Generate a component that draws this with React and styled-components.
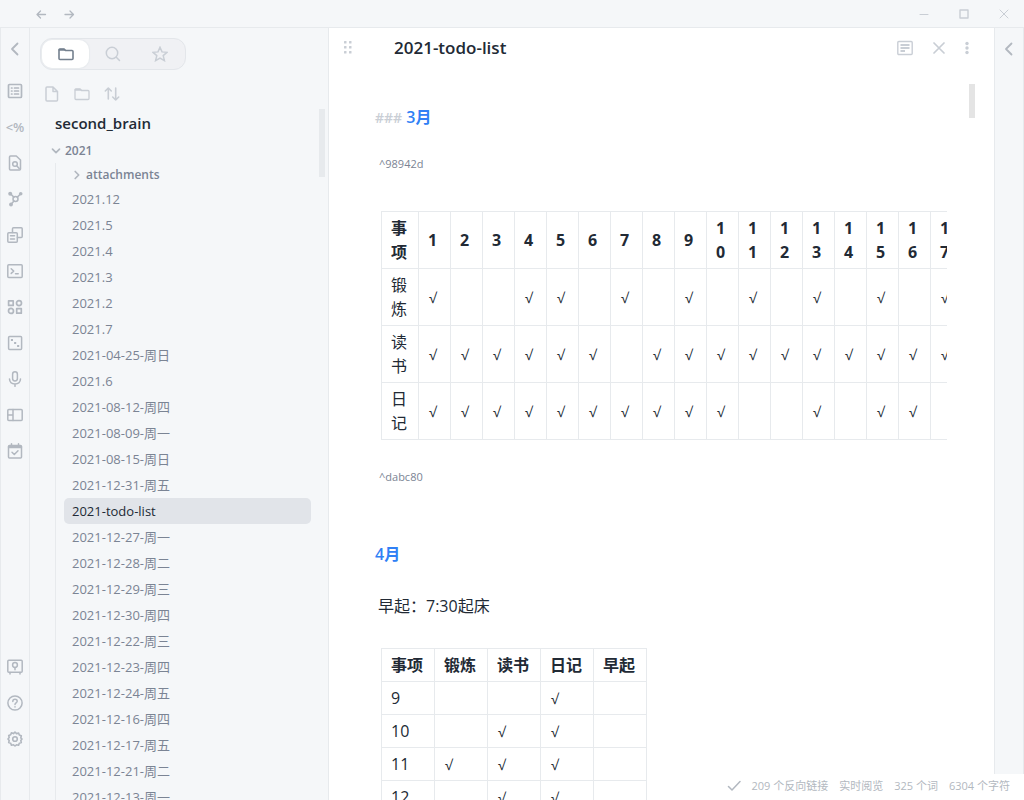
import React from "react";
import styled, { createGlobalStyle } from "styled-components";

const color = {
  chrome: "#f5f7f9",
  line: "#e7eaed",
  text: "#222a35",
  muted: "#7b8494",
  faint: "#b2b8c0",
  pale: "#c9ced5",
  accent: "#3080f5",
  selected: "#e1e4e9",
};

const GlobalStyle = createGlobalStyle`
  * { box-sizing: border-box; }
  body {
    margin: 0;
    background: #fff;
    color: ${color.text};
    font: 13px/24px "Open Sans", "Noto Sans CJK SC", sans-serif;
  }
  button { border: 0; padding: 0; margin: 0; background: none; color: inherit; font: inherit; cursor: pointer; }
`;

const Window = styled.div`
  display: flex;
  flex-direction: column;
  height: 100vh;
  overflow: hidden;
  position: relative;
`;

const TitleBar = styled.header`
  display: flex;
  justify-content: space-between;
  flex: none;
  height: 28px;
  padding-left: 27px;
  background: ${color.chrome};
  border-bottom: 1px solid ${color.line};
`;

const TitleGroup = styled.div`
  display: flex;
`;

const IconButton = styled.button`
  display: flex;
  align-items: center;
  justify-content: center;
  flex: none;
  width: ${(p) => p.$w || 28}px;
  height: ${(p) => p.$h || 28}px;
  color: ${(p) => p.$color || color.faint};
`;

const Workspace = styled.div`
  display: flex;
  flex: 1;
  min-height: 0;
`;

const Ribbon = styled.nav`
  display: flex;
  flex-direction: column;
  justify-content: space-between;
  flex: none;
  width: 30px;
  padding-bottom: 43px;
  background: ${color.chrome};
  border-left: 1px solid ${color.line};
  border-right: 1px solid ${color.line};
`;

const RibbonGroup = styled.div`
  display: flex;
  flex-direction: column;
`;

const RibbonToggle = styled(IconButton)`
  margin-bottom: 3px;
`;

const TemplateMark = styled.span`
  font-size: 13px;
  font-weight: 600;
`;

const Sidebar = styled.aside`
  display: flex;
  flex-direction: column;
  flex: none;
  width: 299px;
  background: ${color.chrome};
  border-right: 1px solid ${color.line};
`;

const TabStrip = styled.div`
  display: flex;
  align-self: flex-start;
  width: 146px;
  margin: 10px 10px 0;
  padding: 1px;
  background: #f0f1f4;
  border: 1px solid #e3e6ea;
  border-radius: 12px;
`;

const Tab = styled.button`
  display: flex;
  align-items: center;
  justify-content: center;
  flex: 1;
  height: 28px;
  border-radius: 10px;
  color: ${(p) => (p.$active ? "#74808e" : color.pale)};
  background: ${(p) => (p.$active ? "#fff" : "none")};
  box-shadow: ${(p) => (p.$active ? "0 0 1px 1px #e8ebee" : "none")};
`;

const NavActions = styled.div`
  display: flex;
  gap: 2px;
  padding: 10px 8px 0;
`;

const Tree = styled.div`
  position: relative;
  flex: 1;
  min-height: 0;
  overflow: hidden;
  color: ${color.muted};
`;

const TreeScroll = styled.div`
  position: absolute;
  top: 1px;
  right: 3px;
  width: 6px;
  height: 68px;
  background: ${color.line};
`;

const VaultName = styled.h2`
  margin: 0;
  padding: 3px 25px 4px;
  font-size: 15px;
  line-height: 24px;
  font-weight: 600;
  color: ${color.text};
`;

const Folder = styled.button`
  display: flex;
  align-items: center;
  gap: 4px;
  height: ${(p) => (p.$nested ? 23 : 24)}px;
  padding-left: ${(p) => (p.$nested ? 16 : 21)}px;
  font-size: 12px;
  font-weight: 600;
  svg { color: ${color.faint}; }
`;

const Children = styled.div`
  margin-left: 25px;
  border-left: 1px solid ${color.line};
`;

const FileList = styled.ul`
  list-style: none;
  margin: 0;
  padding: 0 17px 0 8px;
`;

const FileLink = styled.a`
  display: block;
  height: 26px;
  line-height: 26px;
  padding: 0 8px;
  border-radius: 5px;
  white-space: nowrap;
  text-decoration: none;
  color: ${(p) => (p.$active ? color.text : color.muted)};
  background: ${(p) => (p.$active ? color.selected : "none")};
`;

const Note = styled.main`
  position: relative;
  flex: 1;
  min-width: 0;
  overflow: hidden;
`;

const NoteHeader = styled.div`
  display: flex;
  align-items: center;
  height: 40px;
  padding: 0 16px 0 5px;
`;

const NoteTitle = styled.h1`
  flex: 1;
  margin: 0 0 0 32px;
  font-size: 17px;
  font-weight: 600;
`;

const NoteScroll = styled.div`
  position: absolute;
  top: 56px;
  right: 19px;
  width: 6px;
  height: 34px;
  background: #e4e4e4;
`;

const NoteBody = styled.article`
  padding: 37px 47px 0 46px;
  font-size: 16px;
`;

const Heading = styled.h3`
  margin: 0;
  font-size: 16px;
  line-height: 24px;
  font-weight: 600;
  color: ${color.accent};
`;

const Hashes = styled.span`
  color: ${color.pale};
  font-size: 14px;
  line-height: 16px;
`;

const BlockId = styled.p`
  margin: ${(p) => p.$margin};
  padding-left: 4px;
  font-size: 11px;
  line-height: 20px;
  color: ${color.muted};
`;

const Paragraph = styled.p`
  margin: 28px 0 30px;
  padding-left: 3px;
`;

const TableClip = styled.div`
  margin-left: 6px;
  overflow: hidden;
`;

const DataTable = styled.table`
  border-collapse: collapse;
  table-layout: fixed;
  width: ${(p) => p.$width}px;
  font-size: 16px;
  line-height: 24px;
  col { width: ${(p) => p.$col}px; }
  col:first-child { width: ${(p) => p.$first}px; }
  th, td {
    height: 33px;
    padding: 4px 9px;
    border: 1px solid ${color.line};
    text-align: left;
    word-break: break-all;
  }
  th { font-weight: 700; }
  td { font-weight: 400; }
`;

const Check = styled.span`
  padding-left: 1px;
  font-size: 14px;
  line-height: 16px;
`;

const RightRibbon = styled(Ribbon)``;

const StatusBar = styled.footer`
  position: absolute;
  right: 0;
  bottom: 0;
  display: flex;
  align-items: center;
  gap: 11px;
  height: 26px;
  padding: 0 14px 2px 10px;
  background: #fff;
  font-size: 11px;
  color: ${color.faint};
`;

function Icon({ size = 16, w = 1.5, children }) {
  return (
    <svg width={size} height={size} viewBox={`0 0 ${size} ${size}`} fill="none" stroke="currentColor"
      strokeWidth={w} strokeLinecap="round" strokeLinejoin="round" aria-hidden="true">
      {children}
    </svg>
  );
}

const Chevron = () => <Icon w={1.8}><path d="M10.500 2.500 5 8l5.500 5.500" /></Icon>;
const FolderIcon = ({ w = 1.5 }) => (
  <Icon w={w}>
    <path d="M1 4a1 1 0 0 1 1-1h4l1.500 1.500H14a1 1 0 0 1 1 1V12.500a1 1 0 0 1-1 1H2a1 1 0 0 1-1-1Z" />
    <path d="M1.500 3.800h5" strokeWidth="2" />
  </Icon>
);

const ribbonTop = [
  ["列表", <Icon w={1.7}><rect x="1.500" y="1.500" width="13" height="13" rx="1" /><path d="M4.500 5h.5M4.500 8h.5M4.500 11h.5M7.500 5h4M7.500 8h4M7.500 11h4" /></Icon>],
  ["模板", <TemplateMark>&lt;%</TemplateMark>],
  ["快速切换", <Icon><path d="M3.500 1h5.800L13.500 5v9a1 1 0 0 1-1 1h-9a1 1 0 0 1-1-1V2a1 1 0 0 1 1-1Z" /><circle cx="8" cy="9" r="2.300" /><path d="m9.700 10.700 2.500 2.800" /></Icon>],
  ["关系图谱", <Icon><circle cx="8.500" cy="8" r="2.500" /><path d="m4 3.300 2.800 2.800M13 3.500l-2.700 2.600M7 10l-2.300 2.500" /><g fill="currentColor" stroke="none"><circle cx="3.200" cy="2.700" r="2" /><circle cx="13.700" cy="2.800" r="1.800" /><circle cx="4" cy="13.500" r="1.900" /></g></Icon>],
  ["复制", <Icon><rect x=".8" y="5.800" width="9.500" height="9.400" rx="1" /><path d="M5.500 5.500V1.800a1 1 0 0 1 1-1h7.700a1 1 0 0 1 1 1v7.700a1 1 0 0 1-1 1h-3.700M3.500 8.800h4M3.500 12h4" /></Icon>],
  ["命令面板", <Icon><rect x=".8" y="1.800" width="14.400" height="12.700" rx="1" /><path d="m4.200 5.800 2.500 2.300-2.500 2.300M8.500 10.800h2.700" /></Icon>],
  ["组件", <Icon w={1.7}><rect x="1.600" y="1.800" width="4.600" height="4.600" /><circle cx="12" cy="4.100" r="2.500" /><circle cx="4" cy="11.900" r="2.500" /><rect x="9.700" y="9.600" width="4.600" height="4.600" /></Icon>],
  ["随机笔记", <Icon><rect x="1.600" y="1.500" width="13" height="13" rx="1" /><path d="M4.800 5h.3M8 8h.3M11 11h.3" strokeWidth="1.800" strokeLinecap="square" /></Icon>],
  ["录音", <Icon><rect x="5.600" y=".8" width="4.800" height="9.200" rx="2.400" /><path d="M2.500 8c.2 3.200 2.400 5 5.500 5s5.300-1.800 5.500-5M8 13v2.300" /></Icon>],
  ["工作区布局", <Icon><rect x=".8" y="2.500" width="14.400" height="11" rx="1" /><path d="M6 2.500v11M1 8h5" /></Icon>],
  ["日历", <Icon><rect x="1.500" y="2.500" width="13" height="12.500" rx="1" /><path d="M2 4h12" strokeWidth="2.400" /><path d="M4.500.8v2M11.500.8v2M5 9.200l2.300 2.300L11 7.700" /></Icon>],
];

const ribbonBottom = [
  ["打开其他库", <Icon><rect x=".8" y="1.200" width="14.400" height="12" rx="1" /><circle cx="8" cy="6" r="2.400" /><path d="M8 8.500v2.300M3 13.500v1.500M13 13.500v1.500" /></Icon>],
  ["帮助", <Icon><circle cx="8" cy="8" r="7.100" /><path d="M5.800 6.500c0-1.400 1-2.200 2.200-2.200s2.200.8 2.200 2c0 1.500-2.200 1.700-2.200 3.200M8 11.800v.1" /></Icon>],
  ["设置", <Icon w={1.6}><path d="M6.500 2.600 8 1l1.500 1.600 2.100-.5.700 2 2 .7-.5 2.100L15 8l-1.200 1.500.5 2.100-2 .7-.7 2-2.100-.5L8 15l-1.500-1.200-2.100.5-.7-2-2-.7.5-2.100L1 8l1.200-1.500-.5-2.100 2-.7.700-2Z" /><circle cx="8" cy="8" r="2.300" /></Icon>],
];

const files = [
  "2021.12", "2021.5", "2021.4", "2021.3", "2021.2", "2021.7", "2021-04-25-周日", "2021.6",
  "2021-08-12-周四", "2021-08-09-周一", "2021-08-15-周日", "2021-12-31-周五", "2021-todo-list",
  "2021-12-27-周一", "2021-12-28-周二", "2021-12-29-周三", "2021-12-30-周四", "2021-12-22-周三",
  "2021-12-23-周四", "2021-12-24-周五", "2021-12-16-周四", "2021-12-17-周五", "2021-12-21-周二",
  "2021-12-13-周一",
];

const days = Array.from({ length: 17 }, (_, i) => i + 1);
const march = [
  ["锻炼", [1, 4, 5, 7, 9, 11, 13, 15, 17]],
  ["读书", [1, 2, 3, 4, 5, 6, 8, 9, 10, 11, 12, 13, 14, 15, 16, 17]],
  ["日记", [1, 2, 3, 4, 5, 6, 7, 8, 9, 10, 13, 15, 16]],
];

const aprilHead = ["事项", "锻炼", "读书", "日记", "早起"];
const april = [
  ["9", [3]],
  ["10", [2, 3]],
  ["11", [1, 2, 3]],
  ["12", [2, 3]],
];

export default function App() {
  return (
    <Window>
      <GlobalStyle />
      <TitleBar>
        <TitleGroup>
          <IconButton aria-label="后退"><Icon size={12} w={1.3}><path d="M10.500 6.500h-8M5.500 3 2 6.500 5.500 10" /></Icon></IconButton>
          <IconButton aria-label="前进"><Icon size={12} w={1.3}><path d="M2 6.500h8M7 3l3.500 3.500L7 10" /></Icon></IconButton>
        </TitleGroup>
        <TitleGroup>
          <IconButton $w={40} $color={color.pale} aria-label="最小化"><Icon size={10} w={1}><path d="M1 5.500h8" /></Icon></IconButton>
          <IconButton $w={40} $color={color.pale} aria-label="最大化"><Icon size={10} w={1.4}><rect x="1" y="1" width="8" height="8" rx="0" /></Icon></IconButton>
          <IconButton $w={40} $color={color.pale} aria-label="关闭窗口"><Icon size={10} w={1}><path d="m1 1 8 8M9 1 1 9" /></Icon></IconButton>
        </TitleGroup>
      </TitleBar>

      <Workspace>
        <Ribbon aria-label="左侧功能区">
          <RibbonGroup>
            <RibbonToggle $h={42} aria-label="折叠左侧栏"><Chevron /></RibbonToggle>
            {ribbonTop.map(([label, icon]) => (
              <IconButton key={label} $h={36} aria-label={label}>{icon}</IconButton>
            ))}
          </RibbonGroup>
          <RibbonGroup>
            {ribbonBottom.map(([label, icon]) => (
              <IconButton key={label} $h={36} aria-label={label}>{icon}</IconButton>
            ))}
          </RibbonGroup>
        </Ribbon>

        <Sidebar>
          <TabStrip>
            <Tab $active aria-label="文件列表"><FolderIcon w={1.6} /></Tab>
            <Tab aria-label="搜索"><Icon w={1.5}><circle cx="7" cy="7" r="5.700" /><path d="m11.300 11.300 3.200 3.200" /></Icon></Tab>
            <Tab aria-label="星标"><Icon w={1.5}><path d="m8 1.300 2 4.600 5 .4-3.800 3.300 1.200 5L8 12l-4.400 2.600 1.200-5L1 6.300l5-.4Z" strokeLinejoin="miter" /></Icon></Tab>
          </TabStrip>
          <NavActions>
            <IconButton $color={color.pale} aria-label="新建笔记"><Icon><path d="M3 1h6l4.500 4.500V14a1 1 0 0 1-1 1H3a1 1 0 0 1-1-1V2a1 1 0 0 1 1-1ZM9 1v4.500h4.500" /></Icon></IconButton>
            <IconButton $color={color.pale} aria-label="新建文件夹"><FolderIcon w={1.3} /></IconButton>
            <IconButton $color={color.pale} aria-label="排序"><Icon w={1.6}><path d="M4.300 13V2M1.300 5l3-3 3 3M11.700 2v12M8.700 11l3 3 3-3" /></Icon></IconButton>
          </NavActions>
          <Tree>
            <VaultName>second_brain</VaultName>
            <Folder><Icon size={10} w={1.7}><path d="M1.500 3.200 5 6.700l3.500-3.500" /></Icon>2021</Folder>
            <Children>
              <Folder $nested><Icon size={10} w={1.700}><path d="M3.200 1.500 6.700 5 3.200 8.500" /></Icon>attachments</Folder>
              <FileList>
                {files.map((name) => (
                  <li key={name}>
                    <FileLink href="#" $active={name === "2021-todo-list"}>{name}</FileLink>
                  </li>
                ))}
              </FileList>
            </Children>
            <TreeScroll />
          </Tree>
        </Sidebar>

        <Note>
          <NoteHeader>
            <IconButton $color={color.pale} aria-label="拖动">
              <Icon size={14}><g fill="currentColor" stroke="none">
                {[1, 6, 11].map((y) => [3, 8].map((x) => <rect key={`${x}-${y}`} x={x} y={y - 1} width="2.500" height="2.500" rx=".5" />))}
              </g></Icon>
            </IconButton>
            <NoteTitle>2021-todo-list</NoteTitle>
            <IconButton $w={34} $color={color.pale} aria-label="阅读视图"><Icon w={1.4}><rect x=".8" y="1.500" width="14.400" height="13" rx="1" /><path d="M3.500 5h9M3.500 8h9M3.500 11h4.500" strokeWidth="1.800" strokeLinecap="butt" /></Icon></IconButton>
            <IconButton $w={34} $color={color.pale} aria-label="关闭"><Icon size={12} w={1.7}><path d="m1 1 10 10M11 1 1 11" /></Icon></IconButton>
            <IconButton $w={22} $color={color.pale} aria-label="更多选项"><Icon><g fill="currentColor" stroke="none"><circle cx="8" cy="3.500" r="1.700" /><circle cx="8" cy="8" r="1.700" /><circle cx="8" cy="12.500" r="1.700" /></g></Icon></IconButton>
          </NoteHeader>

          <NoteBody>
            <Heading><Hashes>###</Hashes> 3月</Heading>
            <BlockId $margin="25px 0 37px">^98942d</BlockId>
            <TableClip>
              <DataTable $width={582} $first={37} $col={32}>
                <colgroup><col />{days.map((d) => <col key={d} />)}</colgroup>
                <thead>
                  <tr><th>事项</th>{days.map((d) => <th key={d}>{d}</th>)}</tr>
                </thead>
                <tbody>
                  {march.map(([name, done]) => (
                    <tr key={name}>
                      <td>{name}</td>
                      {days.map((d) => <td key={d}>{done.includes(d) && <Check>√</Check>}</td>)}
                    </tr>
                  ))}
                </tbody>
              </DataTable>
            </TableClip>
            <BlockId $margin="27px 0 55px">^dabc80</BlockId>
            <Heading>4月</Heading>
            <Paragraph>早起：7:30起床</Paragraph>
            <TableClip>
              <DataTable $width={266} $first={53} $col={53}>
                <colgroup>{aprilHead.map((h) => <col key={h} />)}</colgroup>
                <thead>
                  <tr>{aprilHead.map((h) => <th key={h}>{h}</th>)}</tr>
                </thead>
                <tbody>
                  {april.map(([day, done]) => (
                    <tr key={day}>
                      <td>{day}</td>
                      {[1, 2, 3, 4].map((i) => <td key={i}>{done.includes(i) && <Check>√</Check>}</td>)}
                    </tr>
                  ))}
                </tbody>
              </DataTable>
            </TableClip>
          </NoteBody>
          <NoteScroll />
        </Note>

        <RightRibbon aria-label="右侧功能区">
          <RibbonToggle $h={42} aria-label="展开右侧栏"><Chevron /></RibbonToggle>
        </RightRibbon>
      </Workspace>

      <StatusBar>
        <Icon size={14} w={1.5}><path d="m1.500 7.500 3.500 3.500L13 2.500" /></Icon>
        <span>209 个反向链接</span>
        <span>实时阅览</span>
        <span>325 个词</span>
        <span>6304 个字符</span>
      </StatusBar>
    </Window>
  );
}
